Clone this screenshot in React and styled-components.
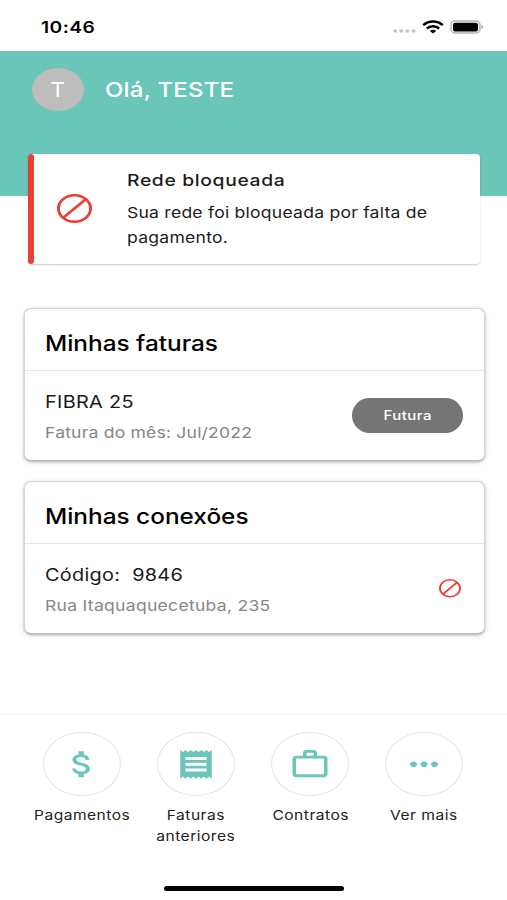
import React from 'react';
import styled, { createGlobalStyle } from 'styled-components';

const TEAL = '#6ac6b9';
const RED = '#ea3f33';

const ICONS = {
    dollar:
        'M11.8 10.9c-2.27-.59-3-1.2-3-2.15 0-1.09 1.01-1.85 2.7-1.85 1.78 0 2.44.85 2.5 2.1h2.21c-.07-1.72-1.12-3.3-3.21-3.81V3h-3v2.16c-1.94.42-3.5 1.68-3.5 3.61 0 2.31 1.91 3.46 4.7 4.13 2.5.6 3 1.48 3 2.41 0 .69-.49 1.79-2.7 1.79-2.06 0-2.87-.92-2.98-2.1h-2.2c.12 2.19 1.76 3.42 3.68 3.83V21h3v-2.15c1.95-.37 3.5-1.5 3.5-3.55 0-2.84-2.43-3.81-4.7-4.4z',
    receipt:
        'M18 17H6v-2h12v2zm0-4H6v-2h12v2zm0-4H6V7h12v2zM3 22l1.5-1.5L6 22l1.5-1.5L9 22l1.5-1.5L12 22l1.5-1.5L15 22l1.5-1.5L18 22l1.5-1.5L21 22V2l-1.5 1.5L18 2l-1.5 1.5L15 2l-1.5 1.5L12 2l-1.5 1.5L9 2 7.5 3.5 6 2 4.5 3.5 3 2v20z',
    work:
        'M14 6V4h-4v2h4zM4 8v11h16V8H4zm16-2c1.11 0 2 .89 2 2v11c0 1.11-.89 2-2 2H4c-1.11 0-2-.89-2-2l.01-11c0-1.11.88-2 1.99-2h4V4c0-1.11.89-2 2-2h4c1.11 0 2 .89 2 2v2h4z',
    more:
        'M6 10c-1.1 0-2 .9-2 2s.9 2 2 2 2-.9 2-2-.9-2-2-2zm12 0c-1.1 0-2 .9-2 2s.9 2 2 2 2-.9 2-2-.9-2-2-2zm-6 0c-1.1 0-2 .9-2 2s.9 2 2 2 2-.9 2-2-.9-2-2-2z'
};

const actions = [
    { label: ['Pagamentos'], icon: 'dollar' },
    { label: ['Faturas', 'anteriores'], icon: 'receipt' },
    { label: ['Contratos'], icon: 'work' },
    { label: ['Ver mais'], icon: 'more' }
];

const Blocked = ({ width, height, weight }) => (
    <svg width={width} height={height} viewBox="0 0 24 24" preserveAspectRatio="none">
        <g fill="none" stroke={RED} strokeWidth={weight}>
            <circle cx="12" cy="12" r={12 - weight / 2} />
            <path d="M4 20L20 4" />
        </g>
    </svg>
);

const Signal = () => (
    <svg width="23" height="4" viewBox="0 0 23 4" fill="#c6c6c6">
        <ellipse cx="2.2" cy="2" rx="2" ry="1.7" />
        <ellipse cx="8.3" cy="2" rx="2" ry="1.7" />
        <ellipse cx="14.4" cy="2" rx="2" ry="1.7" />
        <ellipse cx="20.5" cy="2" rx="2" ry="1.7" />
    </svg>
);

const Wifi = () => (
    <svg width="22" height="14" viewBox="0 0 22 14" fill="none" stroke="#000" strokeWidth="2.4">
        <path d="M1.2 5.2C6.6 .2 15.4 .2 20.8 5.2" />
        <path d="M4.8 8.5C8.3 5.4 13.7 5.4 17.2 8.5" />
        <path d="M11 13.4L7.9 11C9.4 9.2 12.6 9.2 14.1 11Z" fill="#000" stroke="none" />
    </svg>
);

const Battery = () => (
    <svg width="34" height="14" viewBox="0 0 34 14">
        <rect x="1" y="1" width="29" height="12" rx="4" fill="#fff" stroke="#b4b4b4" strokeWidth="1.5" />
        <rect x="3" y="2.8" width="25" height="8.6" rx="2" fill="#000" />
        <path d="M31.5 4.8c1.8.6 1.8 3.8 0 4.4z" fill="#999" />
    </svg>
);

export default () => (
    <Screen>
        <GlobalStyle />
        <StatusBar>
            <Clock>10:46</Clock>
            <StatusIcons>
                <Signal />
                <Wifi />
                <Battery />
            </StatusIcons>
        </StatusBar>
        <Header>
            <Avatar>
                <Initial>T</Initial>
            </Avatar>
            <Greeting>Olá, TESTE</Greeting>
        </Header>
        <Alert>
            <AlertBar />
            <AlertIcon>
                <Blocked width={35} height={29} weight={2} />
            </AlertIcon>
            <AlertBody>
                <AlertTitle>Rede bloqueada</AlertTitle>
                <AlertText $track={0.2}>Sua rede foi bloqueada por falta de</AlertText>
                <AlertText $track={0.22}>pagamento.</AlertText>
            </AlertBody>
        </Alert>
        <Cards>
            <Card>
                <CardHead>
                    <CardTitle>Minhas faturas</CardTitle>
                </CardHead>
                <CardBody>
                    <div>
                        <ItemName>FIBRA 25</ItemName>
                        <ItemDetail $track={0.17}>Fatura do mês: Jul/2022</ItemDetail>
                    </div>
                    <Pill>
                        <PillText>Futura</PillText>
                    </Pill>
                </CardBody>
            </Card>
            <Card>
                <CardHead>
                    <CardTitle>Minhas conexões</CardTitle>
                </CardHead>
                <CardBody>
                    <div>
                        <ItemName>{'Código:  9846'}</ItemName>
                        <ItemDetail $track={0.24}>Rua Itaquaquecetuba, 235</ItemDetail>
                    </div>
                    <ItemIcon>
                        <Blocked width={22} height={18.5} weight={2.1} />
                    </ItemIcon>
                </CardBody>
            </Card>
        </Cards>
        <Footer>
            <Actions>
                {actions.map(({ label, icon }) => (
                    <Action key={icon}>
                        <Circle>
                            <svg
                                width="42"
                                height="34.5"
                                viewBox="0 0 24 24"
                                preserveAspectRatio="none"
                                fill={TEAL}
                            >
                                <path d={ICONS[icon]} />
                            </svg>
                        </Circle>
                        {label.map(line => (
                            <ActionLabel key={line}>{line}</ActionLabel>
                        ))}
                    </Action>
                ))}
            </Actions>
            <HomeBar />
        </Footer>
    </Screen>
);

const GlobalStyle = createGlobalStyle`
    * {
        box-sizing: border-box;
    }

    body {
        margin: 0;
        background: #fff;
    }

    svg {
        display: block;
        flex: none;
    }
`;

const Screen = styled.div`
    display: flex;
    flex-direction: column;
    width: 507px;
    height: 900px;
    overflow: hidden;
    background: #fff;
    font-family: Inter, 'Liberation Sans', sans-serif;
`;

/* letters are drawn wide, so every label is stretched from its left edge */
const Text = styled.div`
    width: max-content;
    white-space: pre;
    transform: scaleX(1.17);
    transform-origin: left;
`;

const StatusBar = styled.div`
    display: flex;
    flex: none;
    justify-content: space-between;
    height: 51px;
    padding: 0 23px 0 41px;
`;

const Clock = styled(Text)`
    font-size: 16px;
    font-weight: 600;
    line-height: 55px;
    letter-spacing: 0.4px;
    transform: scaleX(1.2);
`;

const StatusIcons = styled.div`
    display: flex;
    height: 14px;
    margin-top: 20px;
    align-items: center;

    svg:first-child {
        align-self: flex-end;
        margin: 0 6px 1px 0;
    }

    svg:last-child {
        margin-left: 6px;
    }
`;

const Header = styled.div`
    display: flex;
    flex: none;
    align-items: flex-start;
    height: 145px;
    padding: 17px 32px 0;
    background: ${TEAL};
    color: #fff;
`;

const Avatar = styled.div`
    display: flex;
    justify-content: center;
    width: 52px;
    height: 43px;
    border-radius: 50%;
    background: #bdbdbd;
`;

const Initial = styled(Text)`
    font-size: 20.5px;
    line-height: 43px;
    transform: scaleX(1.12);
    transform-origin: center;
`;

const Greeting = styled(Text)`
    margin-left: 21px;
    font-size: 20.5px;
    font-weight: 450;
    line-height: 43px;
    letter-spacing: 0.17px;
`;

const Alert = styled.div`
    display: flex;
    flex: none;
    height: 110px;
    margin: -42px 27px 0 28px;
    border-radius: 4px;
    background: #fff;
    box-shadow: 0 1px 2px rgba(0, 0, 0, 0.22);
    color: #1c1c1c;
`;

const AlertBar = styled.div`
    width: 5.5px;
    border-radius: 3px;
    background: ${RED};
`;

const AlertIcon = styled.div`
    width: 93.5px;
    padding: 40px 0 0 23.5px;
`;

const AlertBody = styled.div`
    padding-top: 14px;
`;

const AlertTitle = styled(Text)`
    margin-bottom: 7px;
    font-size: 16.5px;
    font-weight: 500;
    line-height: 25px;
    letter-spacing: 0.55px;
`;

const AlertText = styled(Text)`
    font-size: 15px;
    line-height: 25.3px;
    letter-spacing: ${p => p.$track}px;
`;

const Cards = styled.div`
    display: flex;
    flex: 1;
    flex-direction: column;
    gap: 20px;
    padding: 44px 22px 0 24px;
`;

const Card = styled.div`
    height: 153px;
    border: 1px solid #d3d6d6;
    border-bottom-color: #bbb;
    border-radius: 7px;
    background: #fff;
    box-shadow: 0 1px 3px rgba(0, 0, 0, 0.3), 0 2px 8px rgba(0, 0, 0, 0.06);
`;

const CardHead = styled.div`
    height: 62px;
    padding-left: 20px;
    border-bottom: 1px solid #e6e6e6;
`;

const CardTitle = styled(Text)`
    font-size: 21px;
    font-weight: 500;
    line-height: 69px;
    transform: scaleX(1.16);
`;

const CardBody = styled.div`
    display: flex;
    justify-content: space-between;
    padding: 19px 21px 0 20px;
`;

const ItemName = styled(Text)`
    color: #1a1a1a;
    font-size: 17px;
    line-height: 25px;
    letter-spacing: 0.25px;
`;

const ItemDetail = styled(Text)`
    margin-top: 6px;
    color: #868686;
    font-size: 15px;
    line-height: 24px;
    letter-spacing: ${p => p.$track}px;
`;

const Pill = styled.div`
    display: flex;
    justify-content: center;
    width: 111px;
    height: 35px;
    margin-top: 8px;
    border-radius: 18px;
    background: #757575;
`;

const PillText = styled(Text)`
    color: #fff;
    font-size: 12.8px;
    font-weight: 500;
    line-height: 35px;
    letter-spacing: 0.4px;
    transform-origin: center;
`;

const ItemIcon = styled.div`
    margin: 16px 2px 0 0;
`;

const Footer = styled.div`
    display: flex;
    flex: none;
    flex-direction: column;
    align-items: center;
    justify-content: space-between;
    height: 186px;
    padding-bottom: 9px;
    border-top: 1px solid #f1f1f1;
`;

const Actions = styled.div`
    display: grid;
    grid-template-columns: repeat(4, 114px);
    padding: 16.5px 0.6px 0 0;
`;

const Action = styled.div`
    display: flex;
    flex-direction: column;
    align-items: center;
`;

const Circle = styled.div`
    display: flex;
    align-items: center;
    justify-content: center;
    width: 78px;
    height: 64.5px;
    margin-bottom: 9px;
    border: 1px solid #e3e3e3;
    border-radius: 50%;
`;

const ActionLabel = styled(Text)`
    color: #222;
    font-size: 13.3px;
    line-height: 21px;
    letter-spacing: 0.42px;
    transform-origin: center;
`;

const HomeBar = styled.div`
    width: 180px;
    height: 5px;
    border-radius: 3px;
    background: #000;
`;
